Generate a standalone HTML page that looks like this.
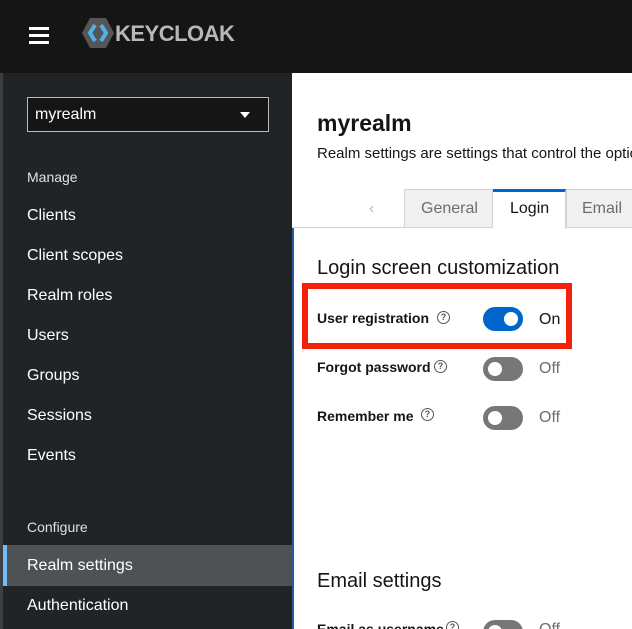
<!DOCTYPE html>
<html><head><style>
*{margin:0;padding:0;box-sizing:border-box}
html,body{width:632px;height:629px;overflow:hidden}
body{background:#fff;font-family:"Liberation Sans",sans-serif;position:relative}
.a{position:absolute;white-space:nowrap}
.hdr{left:0;top:0;width:632px;height:73px;background:#151515}
.side{left:0;top:73px;width:292px;height:556px;background:#212427;border-left:3px solid #3c3f42}
.nav{color:#fff;font-size:16px;left:27px}
.sec{color:#e0e0e0;font-size:14px;left:27px}
.lbl{font-size:14px;font-weight:bold;color:#151515;left:317px}
.q{width:13px;height:13px;border:1.3px solid #555;border-radius:50%;font-size:9px;color:#555;text-align:center;line-height:11px;font-weight:bold}
.tg{width:40px;height:24px;border-radius:12px;background:#777}
.tg::after{content:"";position:absolute;top:5px;left:5px;width:14px;height:14px;border-radius:50%;background:#fff}
.tg.on{background:#0066cc}.tg.on::after{left:21px}
.st{font-size:16px;color:#6a6e73;left:539px}
</style></head><body>
<div class="a hdr"></div>
<div class="a" style="left:29px;top:27px;width:20px;height:3px;background:#fff;box-shadow:0 7px 0 #fff,0 14px 0 #fff"></div>
<svg class="a" style="left:80px;top:16px" width="36" height="34" viewBox="0 0 36 34"><polygon points="10,2 26,2 34,17 26,32 10,32 2,17" fill="#555"/><path d="M15 9 L10 17 L15 25 M21 9 L26 17 L21 25" stroke="#4fb3e8" stroke-width="4" fill="none"/></svg>
<div class="a" style="left:115px;top:21px;font-size:22px;font-weight:bold;color:#b8b8b8;letter-spacing:-0.5px">KEYCLOAK</div>
<div class="a side"></div>
<div class="a" style="left:27px;top:97px;width:242px;height:35px;border:1px solid #b8bbbe;background:#151515"></div>
<div class="a" style="left:35px;top:106px;color:#fff;font-size:16px">myrealm</div>
<div class="a" style="left:240px;top:112px;width:0;height:0;border-left:5px solid transparent;border-right:5px solid transparent;border-top:6px solid #fff"></div>
<div class="a sec" style="top:169px">Manage</div>
<div class="a nav" style="top:207px">Clients</div>
<div class="a nav" style="top:247px">Client scopes</div>
<div class="a nav" style="top:287px">Realm roles</div>
<div class="a nav" style="top:327px">Users</div>
<div class="a nav" style="top:367px">Groups</div>
<div class="a nav" style="top:407px">Sessions</div>
<div class="a nav" style="top:447px">Events</div>
<div class="a sec" style="top:519px">Configure</div>
<div class="a" style="left:3px;top:545px;width:289px;height:41px;background:#4f5255;border-left:4px solid #73bcf7"></div>
<div class="a nav" style="top:557px">Realm settings</div>
<div class="a nav" style="top:597px">Authentication</div>
<div class="a" style="left:317px;top:110px;font-size:23px;font-weight:bold;color:#151515">myrealm</div>
<div class="a" style="left:317px;top:145px;font-size:15px;color:#151515">Realm settings are settings that control the options</div>
<div class="a" style="left:292px;top:227px;width:340px;height:1px;background:#d2d2d2"></div>
<div class="a" style="left:369px;top:200px;color:#b8bbbe;font-size:16px">‹</div>
<div class="a" style="left:404px;top:189px;width:89px;height:39px;background:#f0f0f0;border:1px solid #d2d2d2"></div>
<div class="a" style="left:421px;top:200px;font-size:16px;color:#6a6e73">General</div>
<div class="a" style="left:493px;top:189px;width:73px;height:40px;background:#fff;border-top:3px solid #0066cc;border-right:1px solid #d2d2d2"></div>
<div class="a" style="left:510px;top:200px;font-size:16px;color:#151515">Login</div>
<div class="a" style="left:566px;top:189px;width:70px;height:39px;background:#f0f0f0;border:1px solid #d2d2d2"></div>
<div class="a" style="left:582px;top:200px;font-size:16px;color:#6a6e73">Email</div>
<div class="a" style="left:292px;top:228px;width:2px;height:401px;background:#2b5a9b"></div>
<div class="a" style="left:317px;top:257px;font-size:20px;color:#151515">Login screen customization</div>
<div class="a" style="left:302px;top:283px;width:270px;height:66px;border:6px solid #f5200c"></div>
<div class="a lbl" style="top:310px">User registration</div>
<div class="a q" style="left:437px;top:311px">?</div>
<div class="a tg on" style="left:483px;top:307px"></div>
<div class="a" style="left:539px;top:311px;font-size:16px;color:#151515">On</div>
<div class="a lbl" style="top:359px">Forgot password</div>
<div class="a q" style="left:434px;top:360px">?</div>
<div class="a tg" style="left:483px;top:357px"></div>
<div class="a st" style="top:360px">Off</div>
<div class="a lbl" style="top:408px">Remember me</div>
<div class="a q" style="left:421px;top:408px">?</div>
<div class="a tg" style="left:483px;top:406px"></div>
<div class="a st" style="top:409px">Off</div>
<div class="a" style="left:317px;top:570px;font-size:20px;color:#151515">Email settings</div>
<div class="a lbl" style="top:621px">Email as username</div>
<div class="a q" style="left:446px;top:621px">?</div>
<div class="a tg" style="left:483px;top:620px"></div>
<div class="a st" style="top:621px">Off</div>
</body></html>
